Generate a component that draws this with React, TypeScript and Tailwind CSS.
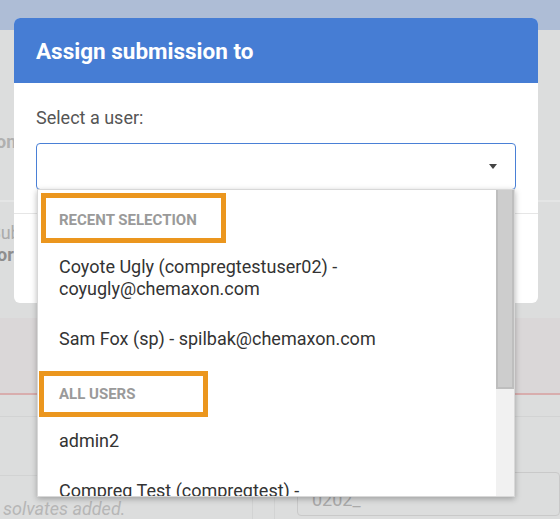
export default function App() {
  return (
    <div className="relative w-[560px] h-[519px] overflow-hidden bg-[#dcdddd] font-['Roboto',sans-serif]">
      {/* background page (behind the overlay) */}
      <div className="h-[30px] bg-[#aebdd6]" />
      <div className="h-[170px] pt-[101px]">
        <div className="ml-[-4px] text-[18px] leading-[22px] font-bold text-[#b0b0b0]">on</div>
      </div>
      <div className="h-[2px] bg-[#e4e5e5]" />
      <div className="h-[116px] pt-[20px]">
        <div className="ml-[-10px] text-[18px] leading-[22px] text-[#ababab]">Sub</div>
        <div className="ml-[-3px] text-[18px] leading-[22px] font-bold text-[#8e8e8e]">or</div>
      </div>
      <div className="h-[75px] bg-[#dad7d8]" />
      <div className="h-[2px] bg-[#d8adad]" />
      <div className="h-[21px]" />
      <div className="h-px bg-[#d2d3d3]" />
      <div className="flex h-[102px]">
        <div className="w-[253px] pt-[58px] border-r border-[#d2d3d3]">
          <div className="h-px bg-[#d2d3d3]" />
          <div className="pl-[3px] pt-[22px] text-[18px] leading-[22px] italic text-[#b6b6b6]">solvates added.</div>
        </div>
        <div className="w-[21px]" />
        <div className="flex-1 border-l border-[#d2d3d3] pl-[22px] pt-[55px]">
          <div className="h-[44px] rounded-[4px] border border-[#c9c9c9] pl-[14px] pt-[16px] text-[18px] leading-[22px] text-[#aaaaaa]">
            0202_
          </div>
        </div>
      </div>

      {/* modal */}
      <div className="absolute left-[14px] top-[18px] w-[524px] h-[285px] rounded-[6px] overflow-hidden bg-white">
        <div className="h-[65px] bg-[#467dd4] px-[22px] flex items-center">
          <span className="text-[22.5px] font-bold text-white leading-[26px] pt-[1px]">Assign submission to</span>
        </div>
        <div className="px-[22px] pt-[24px]">
          <div className="text-[18px] leading-[21px] text-[#555555]">Select a user:</div>
          <div className="mt-[15px] h-[47px] rounded-[4px] border-[1.5px] border-[#4a80d6] flex items-center justify-end pr-[18px]">
            <div className="w-0 h-0 border-l-[4px] border-r-[4px] border-t-[5px] border-l-transparent border-r-transparent border-t-[#444444]" />
          </div>
        </div>
        <div className="mt-[23px] border-t border-[#e6e6e6]" />
      </div>

      {/* dropdown */}
      <div className="absolute left-[37px] top-[189px] w-[478px] h-[308px] bg-white border border-[#d8d8d8] shadow-[0_2px_6px_rgba(0,0,0,0.28)] flex">
        <div className="flex-1 overflow-hidden">
          <div className="pt-[8px]">
            <div className="h-[44px] flex items-center pl-[21px] text-[15px] font-bold text-[#9a9a9a] uppercase">Recent selection</div>
            <div className="px-[21px] py-[14px] text-[18px] leading-[22px] text-[#333333]">
              Coyote Ugly (compregtestuser02) - coyugly@chemaxon.com
            </div>
            <div className="px-[21px] py-[14px] text-[18px] leading-[22px] text-[#333333]">
              Sam Fox (sp) - spilbak@chemaxon.com
            </div>
          </div>
          <div className="pt-[8px]">
            <div className="h-[44px] flex items-center pl-[21px] text-[15px] font-bold text-[#9a9a9a] uppercase">All users</div>
            <div className="px-[21px] py-[14px] text-[18px] leading-[22px] text-[#333333]">admin2</div>
            <div className="px-[21px] py-[14px] text-[18px] leading-[22px] text-[#333333]">
              Compreg Test (compregtest) - compregtest@chemaxon.com
            </div>
          </div>
        </div>
        <div className="w-[18px] bg-[#f1f1f1]">
          <div className="h-[199px] bg-[#cdcdcd] border-2 border-t-0 border-[#bebebe]" />
        </div>

        {/* annotation boxes */}
        <div className="absolute left-[3px] top-[3px] w-[185px] h-[50px] border-[5px] border-[#eb961e]" />
        <div className="absolute left-[1px] top-[181px] w-[169px] h-[46px] border-[5px] border-[#eb961e]" />
      </div>
    </div>
  );
}
